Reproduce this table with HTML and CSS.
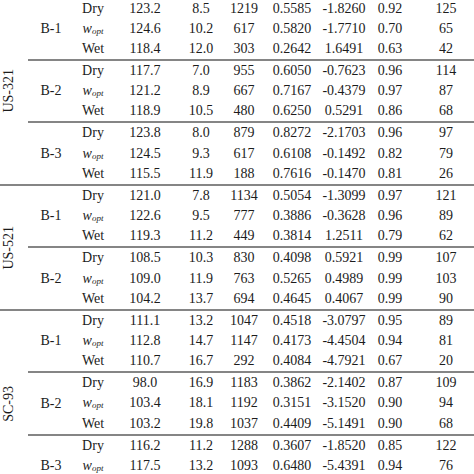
FILE: index.html
```html
<!DOCTYPE html>
<html>
<head>
<meta charset="utf-8">
<link rel="stylesheet" href="styles.css">
</head>
<body>
<div class="table">
  <section class="group">
    <div class="glabel"><span>US-321</span></div>
    <div class="subs">
      <div class="sub">
        <div class="blabel">B-1</div>
        <div class="rows">
          <div class="row"><span>Dry</span><span>123.2</span><span>8.5</span><span>1219</span><span>0.5585</span><span>-1.8260</span><span>0.92</span><span>125</span></div>
          <div class="row"><span class="w"><i>w</i><sub>opt</sub></span><span>124.6</span><span>10.2</span><span>617</span><span>0.5820</span><span>-1.7710</span><span>0.70</span><span>65</span></div>
          <div class="row"><span>Wet</span><span>118.4</span><span>12.0</span><span>303</span><span>0.2642</span><span>1.6491</span><span>0.63</span><span>42</span></div>
        </div>
      </div>
      <div class="sub">
        <div class="blabel">B-2</div>
        <div class="rows">
          <div class="row"><span>Dry</span><span>117.7</span><span>7.0</span><span>955</span><span>0.6050</span><span>-0.7623</span><span>0.96</span><span>114</span></div>
          <div class="row"><span class="w"><i>w</i><sub>opt</sub></span><span>121.2</span><span>8.9</span><span>667</span><span>0.7167</span><span>-0.4379</span><span>0.97</span><span>87</span></div>
          <div class="row"><span>Wet</span><span>118.9</span><span>10.5</span><span>480</span><span>0.6250</span><span>0.5291</span><span>0.86</span><span>68</span></div>
        </div>
      </div>
      <div class="sub">
        <div class="blabel">B-3</div>
        <div class="rows">
          <div class="row"><span>Dry</span><span>123.8</span><span>8.0</span><span>879</span><span>0.8272</span><span>-2.1703</span><span>0.96</span><span>97</span></div>
          <div class="row"><span class="w"><i>w</i><sub>opt</sub></span><span>124.5</span><span>9.3</span><span>617</span><span>0.6108</span><span>-0.1492</span><span>0.82</span><span>79</span></div>
          <div class="row"><span>Wet</span><span>115.5</span><span>11.9</span><span>188</span><span>0.7616</span><span>-0.1470</span><span>0.81</span><span>26</span></div>
        </div>
      </div>
    </div>
  </section>
  <section class="group">
    <div class="glabel"><span>US-521</span></div>
    <div class="subs">
      <div class="sub">
        <div class="blabel">B-1</div>
        <div class="rows">
          <div class="row"><span>Dry</span><span>121.0</span><span>7.8</span><span>1134</span><span>0.5054</span><span>-1.3099</span><span>0.97</span><span>121</span></div>
          <div class="row"><span class="w"><i>w</i><sub>opt</sub></span><span>122.6</span><span>9.5</span><span>777</span><span>0.3886</span><span>-0.3628</span><span>0.96</span><span>89</span></div>
          <div class="row"><span>Wet</span><span>119.3</span><span>11.2</span><span>449</span><span>0.3814</span><span>1.2511</span><span>0.79</span><span>62</span></div>
        </div>
      </div>
      <div class="sub">
        <div class="blabel">B-2</div>
        <div class="rows">
          <div class="row"><span>Dry</span><span>108.5</span><span>10.3</span><span>830</span><span>0.4098</span><span>0.5921</span><span>0.99</span><span>107</span></div>
          <div class="row"><span class="w"><i>w</i><sub>opt</sub></span><span>109.0</span><span>11.9</span><span>763</span><span>0.5265</span><span>0.4989</span><span>0.99</span><span>103</span></div>
          <div class="row"><span>Wet</span><span>104.2</span><span>13.7</span><span>694</span><span>0.4645</span><span>0.4067</span><span>0.99</span><span>90</span></div>
        </div>
      </div>
    </div>
  </section>
  <section class="group">
    <div class="glabel"><span>SC-93</span></div>
    <div class="subs">
      <div class="sub">
        <div class="blabel">B-1</div>
        <div class="rows">
          <div class="row"><span>Dry</span><span>111.1</span><span>13.2</span><span>1047</span><span>0.4518</span><span>-3.0797</span><span>0.95</span><span>89</span></div>
          <div class="row"><span class="w"><i>w</i><sub>opt</sub></span><span>112.8</span><span>14.7</span><span>1147</span><span>0.4173</span><span>-4.4504</span><span>0.94</span><span>81</span></div>
          <div class="row"><span>Wet</span><span>110.7</span><span>16.7</span><span>292</span><span>0.4084</span><span>-4.7921</span><span>0.67</span><span>20</span></div>
        </div>
      </div>
      <div class="sub">
        <div class="blabel">B-2</div>
        <div class="rows">
          <div class="row"><span>Dry</span><span>98.0</span><span>16.9</span><span>1183</span><span>0.3862</span><span>-2.1402</span><span>0.87</span><span>109</span></div>
          <div class="row"><span class="w"><i>w</i><sub>opt</sub></span><span>103.4</span><span>18.1</span><span>1192</span><span>0.3151</span><span>-3.1520</span><span>0.90</span><span>94</span></div>
          <div class="row"><span>Wet</span><span>103.2</span><span>19.8</span><span>1037</span><span>0.4409</span><span>-5.1491</span><span>0.90</span><span>68</span></div>
        </div>
      </div>
      <div class="sub">
        <div class="blabel">B-3</div>
        <div class="rows">
          <div class="row"><span>Dry</span><span>116.2</span><span>11.2</span><span>1288</span><span>0.3607</span><span>-1.8520</span><span>0.85</span><span>122</span></div>
          <div class="row"><span class="w"><i>w</i><sub>opt</sub></span><span>117.5</span><span>13.2</span><span>1093</span><span>0.6480</span><span>-5.4391</span><span>0.94</span><span>76</span></div>
          <div class="row"></div>
        </div>
      </div>
    </div>
  </section>
</div>
</body>
</html>
```
FILE: styles.css
```css
html, body {
  margin: 0;
  padding: 0;
  overflow: hidden;
  background: #ffffff;
}
body {
  width: 474px;
  height: 474px;
}
.table {
  margin-top: -1.5px;
  width: 480px;
  font-family: "Liberation Serif", "Times New Roman", serif;
  font-size: 14px;
  color: #1c1c1c;
}
.group {
  display: flex;
}
.group + .group {
  border-top: 2px solid #858585;
}
.glabel {
  width: 28px;
  flex: none;
  display: flex;
  align-items: center;
  justify-content: flex-start;
}
.glabel span {
  writing-mode: vertical-rl;
  transform: rotate(180deg);
  margin-left: 1px;
  white-space: nowrap;
}
.subs {
  flex: 1;
  display: flex;
  flex-direction: column;
}
.sub {
  display: flex;
}
.sub + .sub {
  border-top: 2px solid #858585;
}
.blabel {
  width: 46px;
  flex: none;
  display: flex;
  align-items: center;
  justify-content: center;
}
.rows {
  flex: 1;
  display: flex;
  flex-direction: column;
}
.row {
  display: grid;
  grid-template-columns: 38px 66px 46px 40px 56px 48px 44px 68px;
  height: 20.17px;
  line-height: 20.17px;
  text-align: center;
  white-space: nowrap;
}
.w {
  font-size: 14px;
  font-style: italic;
}
.w i {
  font-style: italic;
}
.w sub {
  font-size: 9px;
  vertical-align: -1px;
  line-height: 0;
  font-style: italic;
}
```
